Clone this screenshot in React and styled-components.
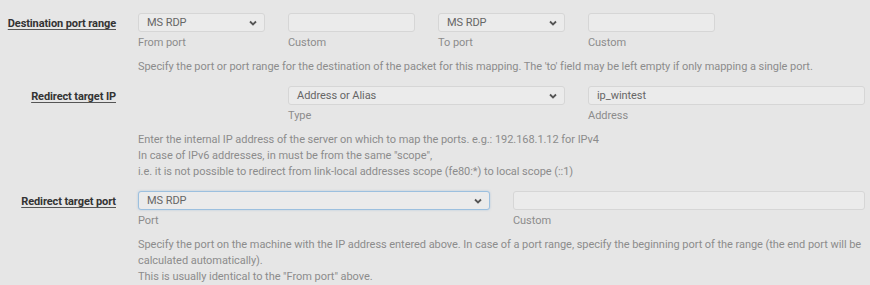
import React from "react";
import styled, { createGlobalStyle } from "styled-components";

const GlobalStyle = createGlobalStyle`
  body {
    margin: 0;
    background: #e6e6e6;
    font-family: Roboto, "Liberation Sans", sans-serif;
    font-size: 11px;
    letter-spacing: -0.05px;
    color: #888;
  }
`;

const Form = styled.div`
  width: 870px;
  padding-top: 13px;
  box-sizing: border-box;
`;

const Row = styled.div`
  display: flex;
  align-items: flex-start;
  margin-bottom: 11px;
`;

const LabelCell = styled.div`
  flex: none;
  width: 138px;
  box-sizing: border-box;
  padding: 3px 22px 0 0;
  text-align: right;
  line-height: 16px;
`;

const RowLabel = styled.span`
  font-weight: 700;
  color: #333;
  letter-spacing: -0.1px;
  text-decoration: underline;
  text-decoration-color: #555;
  text-underline-offset: 2px;
`;

const Grid = styled.div`
  flex: none;
  width: 727px;
  display: grid;
  grid-template-columns: repeat(10, 1fr);
  column-gap: 23px;
`;

const Field = styled.div`
  grid-column: ${(p) => p.start || "auto"} / span ${(p) => p.span};
  display: flex;
  flex-direction: column;
`;

const Box = styled.div`
  height: 19px;
  box-sizing: border-box;
  border: 1px solid ${(p) => (p.focused ? "#9cc0df" : "#d6d6d6")};
  border-radius: 3px;
  background: #ebebeb;
  display: flex;
  align-items: center;
  justify-content: space-between;
  padding: 0 7px 0 8px;
  color: #666;
  line-height: 16px;
  box-shadow: ${(p) => (p.focused ? "0 0 2px rgba(120,170,215,0.5)" : "none")};
`;

const SubLabel = styled.div`
  margin-top: 3px;
  line-height: 16px;
  color: #8c8c8c;
`;

const Help = styled.div`
  grid-column: 1 / -1;
  margin-top: 8px;
  line-height: 16px;
  color: #8c8c8c;
`;

const Chevron = () => (
  <svg width="8" height="6" viewBox="0 0 8 6">
    <path d="M1 1.5 L4 4.5 L7 1.5" fill="none" stroke="#555" strokeWidth="1.8" />
  </svg>
);

const Select = ({ value, focused }) => (
  <Box focused={focused}>
    <span>{value}</span>
    <Chevron />
  </Box>
);

const Input = ({ value }) => (
  <Box>
    <span>{value}</span>
  </Box>
);

export default function App() {
  return (
    <>
      <GlobalStyle />
      <Form>
        <Row>
          <LabelCell>
            <RowLabel>Destination port range</RowLabel>
          </LabelCell>
          <Grid>
            <Field span={2}>
              <Select value="MS RDP" />
              <SubLabel>From port</SubLabel>
            </Field>
            <Field span={2}>
              <Input />
              <SubLabel>Custom</SubLabel>
            </Field>
            <Field span={2}>
              <Select value="MS RDP" />
              <SubLabel>To port</SubLabel>
            </Field>
            <Field span={2}>
              <Input />
              <SubLabel>Custom</SubLabel>
            </Field>
            <Help>
              Specify the port or port range for the destination of the packet for this mapping. The 'to' field may be left empty if only mapping a single port.
            </Help>
          </Grid>
        </Row>

        <Row>
          <LabelCell>
            <RowLabel>Redirect target IP</RowLabel>
          </LabelCell>
          <Grid>
            <Field start={3} span={4}>
              <Select value="Address or Alias" />
              <SubLabel>Type</SubLabel>
            </Field>
            <Field span={4}>
              <Input value="ip_wintest" />
              <SubLabel>Address</SubLabel>
            </Field>
            <Help>
              Enter the internal IP address of the server on which to map the ports. e.g.: 192.168.1.12 for IPv4
              <br />
              In case of IPv6 addresses, in must be from the same "scope",
              <br />
              i.e. it is not possible to redirect from link-local addresses scope (fe80:*) to local scope (::1)
            </Help>
          </Grid>
        </Row>

        <Row>
          <LabelCell>
            <RowLabel>Redirect target port</RowLabel>
          </LabelCell>
          <Grid>
            <Field span={5}>
              <Select value="MS RDP" focused />
              <SubLabel>Port</SubLabel>
            </Field>
            <Field span={5}>
              <Input />
              <SubLabel>Custom</SubLabel>
            </Field>
            <Help>
              Specify the port on the machine with the IP address entered above. In case of a port range, specify the beginning port of the range (the end port will be calculated automatically).
              <br />
              This is usually identical to the "From port" above.
            </Help>
          </Grid>
        </Row>
      </Form>
    </>
  );
}
